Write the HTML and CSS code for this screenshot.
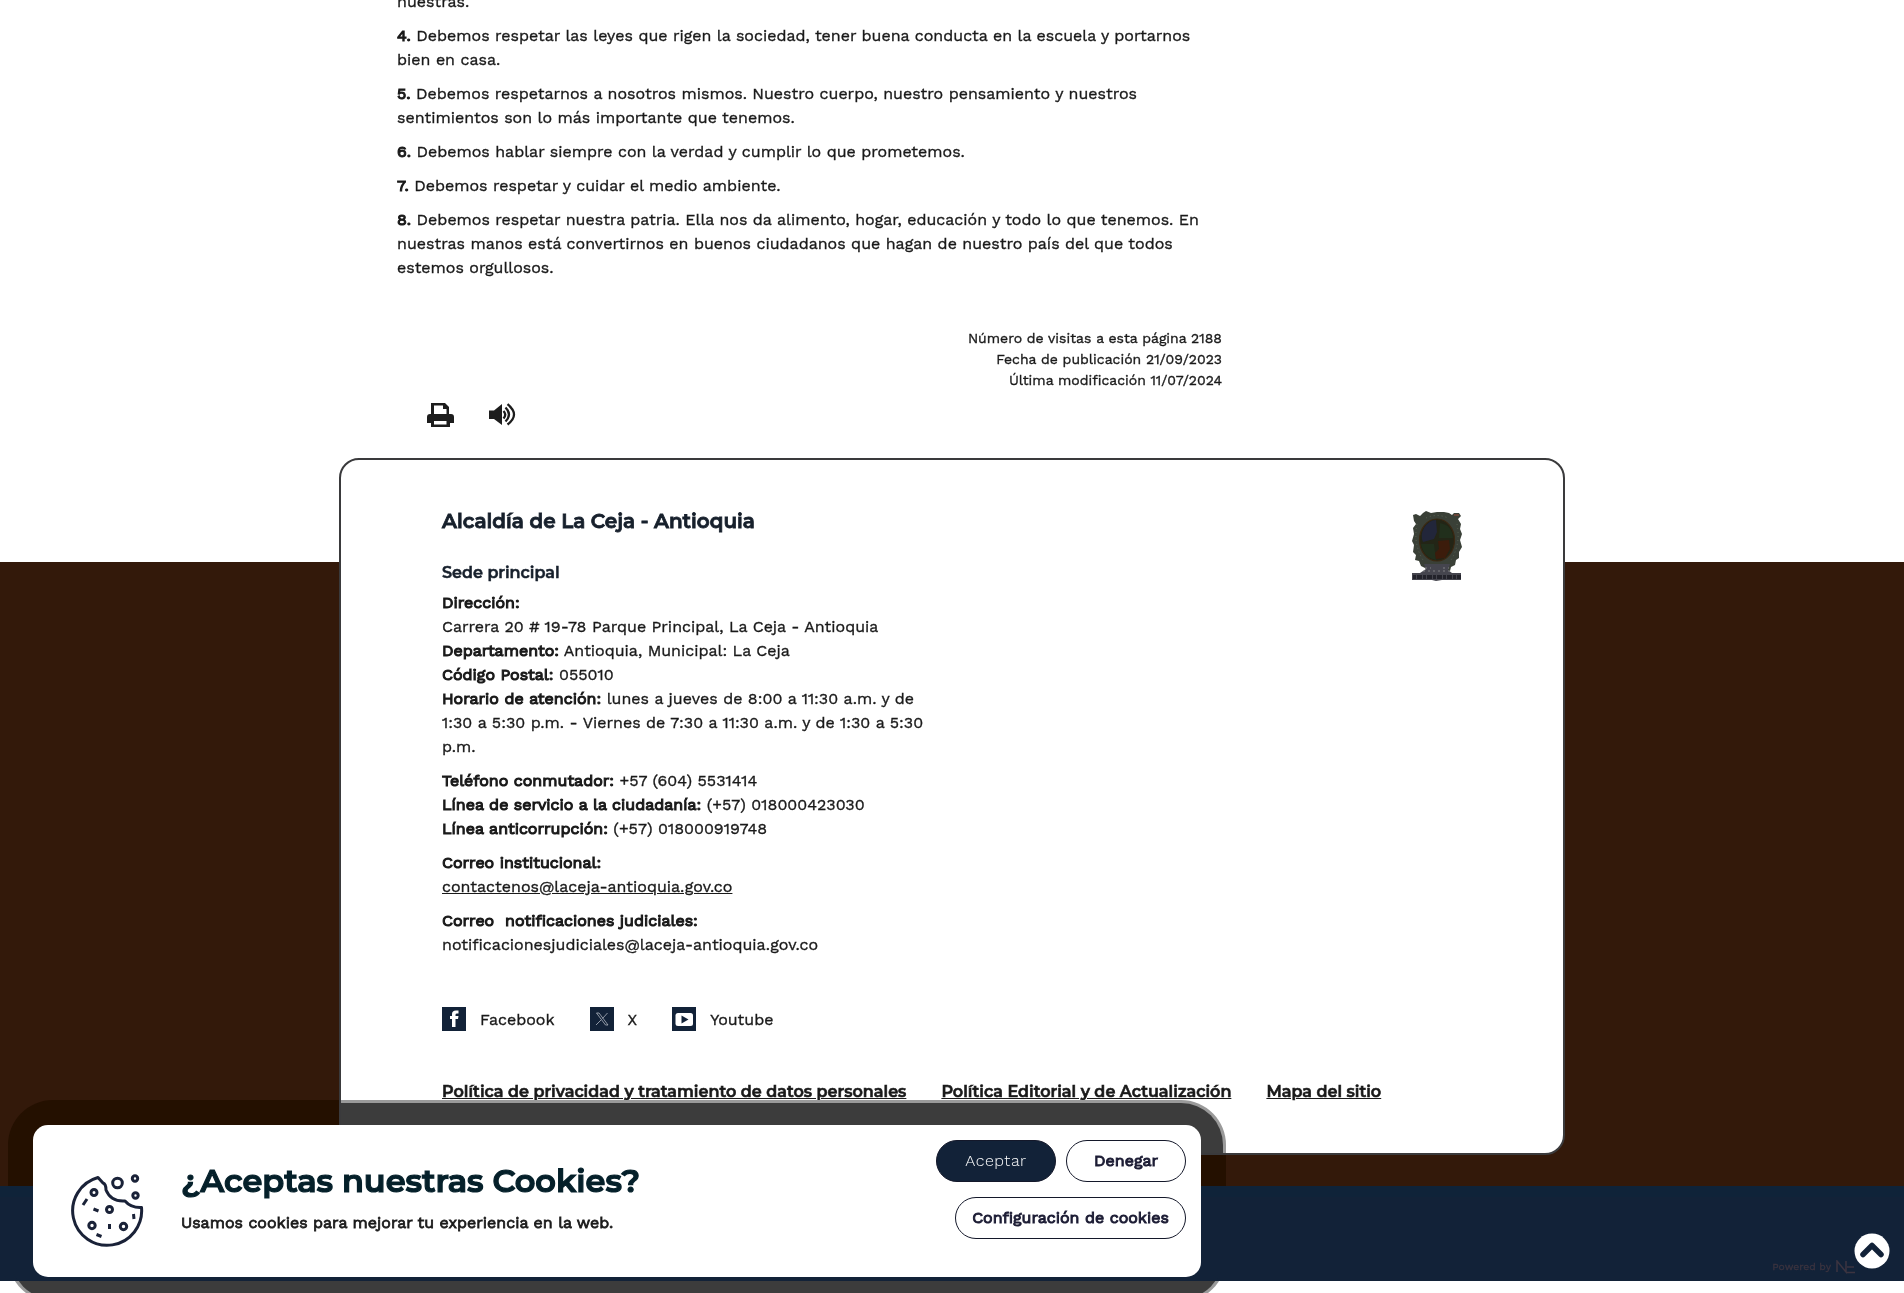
FILE: index.html
```html
<!DOCTYPE html>
<html lang="es">
<head>
<meta charset="utf-8">
<title>Alcaldía de La Ceja - Antioquia</title>
<link rel="stylesheet" href="styles.css">
</head>
<body>
<main class="content">
  <div class="article">
    <p>nuestras.</p>
    <p><b>4.</b> Debemos respetar las leyes que rigen la sociedad, tener buena conducta en la escuela y portarnos<br>bien en casa.</p>
    <p><b>5.</b> Debemos respetarnos a nosotros mismos. Nuestro cuerpo, nuestro pensamiento y nuestros<br>sentimientos son lo más importante que tenemos.</p>
    <p><b>6.</b> Debemos hablar siempre con la verdad y cumplir lo que prometemos.</p>
    <p><b>7.</b> Debemos respetar y cuidar el medio ambiente.</p>
    <p><b>8.</b> Debemos respetar nuestra patria. Ella nos da alimento, hogar, educación y todo lo que tenemos. En<br>nuestras manos está convertirnos en buenos ciudadanos que hagan de nuestro país del que todos<br>estemos orgullosos.</p>
  </div>
  <div class="meta">
    <div>Número de visitas a esta página 2188</div>
    <div>Fecha de publicación 21/09/2023</div>
    <div>Última modificación 11/07/2024</div>
  </div>
  <div class="tools">
    <svg width="27" height="24" viewBox="0 0 27 24"><path fill="#1d1d1d" fill-rule="evenodd" d="M4 0h14l4 4v7h2q3 0 3 3v6h-4v4H4v-4H0v-6q0-3 3-3h1zM7 2.600V11h12.500V6H16V2.600zM7 18v3.500h12.500V18z"/></svg>
    <svg width="27" height="24" viewBox="0 0 27 24"><path fill="#1d1d1d" d="M0 7.500h5L13 1v21l-8-6H0z"/><g fill="none" stroke="#1d1d1d" stroke-width="2.300"><path d="M14.500 8q3.500 3.500 0 7.500M16.500 4.500q7 7 0 14M18.500 1.200q13 10.500 0 20.300"/></g></svg>
  </div>
</main>
<footer class="footer">
  <div class="brown-shade"></div>
  <section class="card">
    <div class="info">
      <h2>Alcaldía de La Ceja - Antioquia</h2>
      <h3>Sede principal</h3>
      <p><b>Dirección:</b><br>Carrera 20 # 19-78 Parque Principal, La Ceja - Antioquia<br>
      <b>Departamento:</b> Antioquia, Municipal: La Ceja<br>
      <b>Código Postal:</b> 055010<br>
      <b>Horario de atención:</b> lunes a jueves de 8:00 a 11:30 a.m. y de<br>1:30 a 5:30 p.m. - Viernes de 7:30 a 11:30 a.m. y de 1:30 a 5:30<br>p.m.</p>
      <p><b>Teléfono conmutador:</b> +57 (604) 5531414<br>
      <b>Línea de servicio a la ciudadanía:</b> (+57) 018000423030<br>
      <b>Línea anticorrupción:</b> (+57) 018000919748</p>
      <p><b>Correo institucional:</b><br><a class="mail">contactenos@laceja-antioquia.gov.co</a></p>
      <p><b>Correo&nbsp; notificaciones judiciales:</b><br>notificacionesjudiciales@laceja-antioquia.gov.co</p>
    </div>
    <svg class="crest" width="50" height="72" viewBox="0 0 50 72">
      <path fill="#3a4037" d="M1 5l3-1 4 2 3-3 3-2 5 2 6-1 7 0 5 1 3 2 2-2 5 0 2 3-3 3 3 5-1 5 2 5-2 6 2 7-3 5 0 6-3 2-1 5-4 2-1 4-4 1h-18l-3-4-4-2-2-5-4-1 1-5-3-3 1-7-2-4 2-7-1-6 3-4-2-3z"/>
      <path fill="#45454e" d="M12 54h26l-2 6 4 3h9v7H30l-6 1-4-1H0v-7h8l6-4z"/>
      <ellipse cx="25" cy="30" rx="17.500" ry="21" fill="#232516" stroke="#3b2812" stroke-width="1.200"/>
      <path fill="#22263a" d="M12 18q5-8 12-8l1 12-3 7-11 3q-3-7 1-14z"/>
      <path fill="#212f1c" d="M9 34h13l2 16q-12-2-15-16zM28 13q12 2 13 15l-14 0z"/>
      <path fill="#3c1c0b" d="M26 31l11-1 1 9-5 9-9 1-1-6 4-4z"/>
      <path fill="none" stroke="#5f6b58" stroke-width=".8" stroke-dasharray="1 3" d="M5 14q-4 20 6 36M45 14q4 20-6 36M14 8q11-5 22 0"/>
      <path fill="none" stroke="#8f9092" stroke-width=".8" stroke-dasharray="2 3" d="M13 58h6M31 58h6M11 61h28"/>
      <path fill="none" stroke="#9a4a3a" d="M42 5h5"/>
      <path fill="none" stroke="#22222a" stroke-width="4" stroke-dasharray="3 1 5 1" d="M1 67h48"/>
    </svg>
    <div class="social">
      <a><svg width="24" height="24"><path fill="#122238" d="M0 0h24v24H0z"/><path fill="#fff" d="M10 20v-8H8V9h2V7q0-3.500 4-3.500h2.500v3H15q-1.500 0-1.500 1.300V9h3l-.5 3h-2.500v8z"/></svg><span>Facebook</span></a>
      <a><svg width="24" height="24"><path fill="#122238" d="M0 0h24v24H0z"/><path fill="none" stroke="#c5cad3" stroke-width=".7" d="M6.500 6H9l9 12h-2.500zM17.500 6l-5 5.500M11 13l-5 5"/></svg><span>X</span></a>
      <a><svg width="24" height="24"><path fill="#122238" d="M0 0h24v24H0z"/><rect x="3.500" y="6" width="17.500" height="13" rx="2.500" fill="#fff"/><path fill="#122238" d="M9.500 8.500l7 4-7 4z"/></svg><span>Youtube</span></a>
    </div>
    <div class="links"><a>Política de privacidad y tratamiento de datos personales</a><a>Política Editorial y de Actualización</a><a>Mapa del sitio</a></div>
  </section>
</footer>
<div class="bar">
  <div class="powered"><span>Powered by</span><svg width="20" height="14" viewBox="0 0 20 14"><path fill="none" stroke="#3c3440" stroke-width="1.500" d="M1 12V1l9 11V1M18 7h-7M10 12.500h9"/></svg></div>
</div>
<a class="totop"><svg width="36" height="36" viewBox="0 0 36 36"><circle cx="18" cy="18" r="17.500" fill="#fff"/><path fill="none" stroke="#122238" stroke-width="5.500" stroke-linecap="round" stroke-linejoin="round" d="M9 21.500l9-9 9 9"/></svg></a>
<div class="shade outer"></div>
<div class="shade inner"></div>
<div class="cookies">
  <svg class="cookie" width="74" height="76" viewBox="0 0 74 76"><g fill="none" stroke="#1a2238" stroke-width="3" stroke-linejoin="round">
    <path d="M28 4.500A34.500 34.500 0 1 0 71.500 34.500Q61 35 55 28Q41 29 36 17Q36 11 33 10Z"/>
    <circle cx="47.500" cy="10" r="4.800"/><circle cx="65" cy="5.500" r="2.700"/><circle cx="65.500" cy="22.500" r="2.700"/>
    <circle cx="24" cy="19.500" r="3"/><circle cx="39.500" cy="36.500" r="3"/><circle cx="22" cy="52.500" r="3.200"/><circle cx="53.500" cy="53.500" r="3.200"/>
    <path d="M17 26l-4 6M23.500 36l5 2M26.500 61.500l5 2M39.500 51v5M63.500 41l.5 5"/></g></svg>
  <div class="ask"><h1>¿Aceptas nuestras Cookies?</h1><p>Usamos cookies para mejorar tu experiencia en la web.</p></div>
  <div class="buttons"><button class="primary">Aceptar</button><button>Denegar</button><button class="wide">Configuración de cookies</button></div>
</div>
</body>
</html>
```
FILE: styles.css
```css
* { box-sizing: border-box; margin: 0; padding: 0; }
body { width: 1904px; height: 1293px; overflow: hidden; position: relative; background: #fff; color: #1a1a1a; font: 400 16px/24px "Work Sans", Inter, sans-serif; -webkit-text-stroke: 0.35px; }
.content { display: flow-root; height: 458px; padding-left: 397px; }
.article { height: 325px; margin-top: -10px; white-space: nowrap; }
p { margin-bottom: 10px; }
b { font-weight: 400; -webkit-text-stroke: 1.1px; }
.meta { width: 825px; margin-top: 13px; text-align: right; font-size: 14px; line-height: 21px; }
.tools { display: flex; gap: 35px; padding: 12px 0 0 30px; }
.footer { position: relative; height: 728px; padding: 0 339px; background: linear-gradient(#fff 104px, #33190a 104px); overflow: hidden; }
.card { position: relative; height: 697px; border: 2px solid #3a3a3c; border-radius: 20px; background: #fff; padding: 49px 101px 0; white-space: nowrap; }
.brown-shade { position: absolute; left: 8px; top: 642px; width: 1218px; height: 202px; border-radius: 45px; background: #241000; }
h2 { font: 600 20px/24px Montserrat, Inter, sans-serif; margin-bottom: 28px; color: #17202c; -webkit-text-stroke: 0.8px; }
h3 { font: 600 16px/24px Montserrat, Inter, sans-serif; margin-bottom: 6px; color: #17202c; -webkit-text-stroke: 0.5px; }
.crest { position: absolute; right: 101px; top: 50px; }
.mail { text-decoration: underline; }
.social { display: flex; gap: 35px; margin-top: 50px; }
.social a { display: flex; gap: 14px; }
.social span { padding-top: 1px; }
.links { display: flex; gap: 35px; margin-top: 48px; font: 600 16px/24px Montserrat, Inter, sans-serif; letter-spacing: 0.02px; -webkit-text-stroke: 0.6px; text-decoration: underline; }
.bar { height: 95px; background: linear-gradient(#0f2339 11px, #122238 11px); display: flex; justify-content: flex-end; align-items: flex-end; padding: 0 48px 6px 0; }
.powered { display: flex; align-items: center; gap: 5px; color: #3a333f; font-size: 10.4px; line-height: 16px; white-space: nowrap; }
.totop { position: absolute; left: 1854px; top: 1233px; height: 36px; }
.shade { position: absolute; mix-blend-mode: darken; }
.outer { left: 8px; top: 1100px; width: 1218px; height: 202px; border-radius: 45px; background: #9a9a9a; }
.inner { left: 11px; top: 1103px; width: 1212px; height: 196px; border-radius: 42px; background: #3c3c3c; }
.cookies { position: absolute; left: 33px; top: 1125px; width: 1168px; height: 152px; border-radius: 15px; background: #fff; display: flex; padding: 15px 15px 0 37px; white-space: nowrap; }
.cookie { margin-top: 33px; }
.ask { margin: 21px 0 0 37px; flex: 1; }
h1 { font: 600 32px/40px Montserrat, Inter, sans-serif; color: #05202a; -webkit-text-stroke: 1.2px; }
.ask p { margin-top: 10px; -webkit-text-stroke: 0.8px; }
.buttons { width: 260px; display: flex; flex-wrap: wrap; justify-content: flex-end; align-content: flex-start; gap: 15px 10px; }
button { width: 120px; height: 42px; border: 1px solid #14182a; border-radius: 21px; background: #fff; color: #1d1d35; font: 400 16px/24px "Work Sans", Inter, sans-serif; -webkit-text-stroke: 1px; }
.primary { background: #122238; color: #fff; font-weight: 300; letter-spacing: 0.5px; -webkit-text-stroke: 0; }
.wide { width: 231px; }
```
